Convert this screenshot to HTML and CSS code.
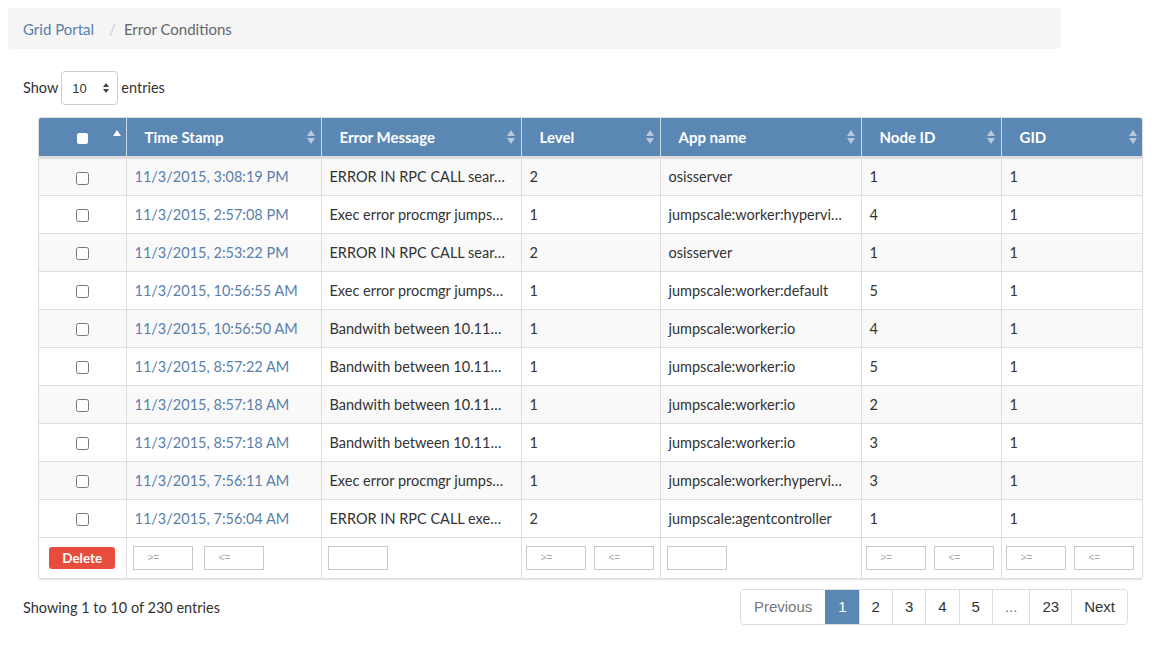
FILE: index.html
```html
<!DOCTYPE html>
<html>
<head>
<meta charset="utf-8">
<link rel="stylesheet" href="styles.css">
</head>
<body>
<div class="page">
  <ol class="breadcrumb">
    <li><a href="#">Grid Portal</a></li>
    <li class="sep">/</li>
    <li class="current">Error Conditions</li>
  </ol>

  <div class="length">
    <span>Show</span>
    <div class="select"><span>10</span><span class="spin"><i class="up"></i><i class="down"></i></span></div>
    <span>entries</span>
  </div>

  <div class="table-wrap">
    <table class="grid">
      <colgroup>
        <col style="width:87px"><col style="width:195px"><col style="width:200px"><col style="width:139px"><col style="width:201px"><col style="width:140px"><col style="width:142px">
      </colgroup>
      <thead>
        <tr>
          <th class="chk"><span class="box"></span><span class="asc"></span></th>
          <th>Time Stamp<span class="sort"></span></th>
          <th>Error Message<span class="sort"></span></th>
          <th>Level<span class="sort"></span></th>
          <th>App name<span class="sort"></span></th>
          <th>Node ID<span class="sort"></span></th>
          <th>GID<span class="sort"></span></th>
        </tr>
      </thead>
      <tbody>
        <tr><td class="chk"><input type="checkbox"></td><td><a href="#">11/3/2015, 3:08:19 PM</a></td><td>ERROR IN RPC CALL sear…</td><td>2</td><td>osisserver</td><td>1</td><td>1</td></tr>
        <tr><td class="chk"><input type="checkbox"></td><td><a href="#">11/3/2015, 2:57:08 PM</a></td><td>Exec error procmgr jumps…</td><td>1</td><td>jumpscale:worker:hypervi…</td><td>4</td><td>1</td></tr>
        <tr><td class="chk"><input type="checkbox"></td><td><a href="#">11/3/2015, 2:53:22 PM</a></td><td>ERROR IN RPC CALL sear…</td><td>2</td><td>osisserver</td><td>1</td><td>1</td></tr>
        <tr><td class="chk"><input type="checkbox"></td><td><a href="#">11/3/2015, 10:56:55 AM</a></td><td>Exec error procmgr jumps…</td><td>1</td><td>jumpscale:worker:default</td><td>5</td><td>1</td></tr>
        <tr><td class="chk"><input type="checkbox"></td><td><a href="#">11/3/2015, 10:56:50 AM</a></td><td>Bandwith between 10.11…</td><td>1</td><td>jumpscale:worker:io</td><td>4</td><td>1</td></tr>
        <tr><td class="chk"><input type="checkbox"></td><td><a href="#">11/3/2015, 8:57:22 AM</a></td><td>Bandwith between 10.11…</td><td>1</td><td>jumpscale:worker:io</td><td>5</td><td>1</td></tr>
        <tr><td class="chk"><input type="checkbox"></td><td><a href="#">11/3/2015, 8:57:18 AM</a></td><td>Bandwith between 10.11…</td><td>1</td><td>jumpscale:worker:io</td><td>2</td><td>1</td></tr>
        <tr><td class="chk"><input type="checkbox"></td><td><a href="#">11/3/2015, 8:57:18 AM</a></td><td>Bandwith between 10.11…</td><td>1</td><td>jumpscale:worker:io</td><td>3</td><td>1</td></tr>
        <tr><td class="chk"><input type="checkbox"></td><td><a href="#">11/3/2015, 7:56:11 AM</a></td><td>Exec error procmgr jumps…</td><td>1</td><td>jumpscale:worker:hypervi…</td><td>3</td><td>1</td></tr>
        <tr><td class="chk"><input type="checkbox"></td><td><a href="#">11/3/2015, 7:56:04 AM</a></td><td>ERROR IN RPC CALL exe…</td><td>2</td><td>jumpscale:agentcontroller</td><td>1</td><td>1</td></tr>
      </tbody>
      <tfoot>
        <tr>
          <td class="chk"><button class="delete">Delete</button></td>
          <td class="wide"><div class="pair"><input class="flt" placeholder="&gt;="><input class="flt" placeholder="&lt;="></div></td>
          <td class="single"><input class="flt"></td>
          <td class="narrow"><div class="pair"><input class="flt" placeholder="&gt;="><input class="flt" placeholder="&lt;="></div></td>
          <td class="single"><input class="flt"></td>
          <td class="narrow"><div class="pair"><input class="flt" placeholder="&gt;="><input class="flt" placeholder="&lt;="></div></td>
          <td class="narrow"><div class="pair"><input class="flt" placeholder="&gt;="><input class="flt" placeholder="&lt;="></div></td>
        </tr>
      </tfoot>
    </table>
  </div>

  <div class="bottom">
    <div class="info">Showing 1 to 10 of 230 entries</div>
    <ul class="pager">
      <li class="muted first">Previous</li>
      <li class="active">1</li>
      <li>2</li>
      <li>3</li>
      <li>4</li>
      <li>5</li>
      <li class="muted">...</li>
      <li>23</li>
      <li>Next</li>
    </ul>
  </div>
</div>
</body>
</html>
```

FILE: styles.css
```css
* { box-sizing: border-box; }
body {
  margin: 8px;
  font-family: Lato, "Open Sans", sans-serif;
  font-size: 14.5px;
  color: #333;
  background: #fff;
}
a { color: #5a7fab; text-decoration: none; }

.page { width: 1135px; }

.breadcrumb {
  list-style: none;
  margin: 0;
  width: 1053px;
  height: 41px;
  padding: 0 15px;
  background: #f5f5f5;
  border-radius: 4px;
  display: flex;
  align-items: center;
  font-size: 15px;
}
.breadcrumb li { line-height: 20px; }
.breadcrumb .sep { color: #ccc; padding: 0 8px 0 15px; }
.breadcrumb .current { color: #666; }

.length {
  display: flex;
  align-items: center;
  gap: 3px;
  margin: 22px 0 0 15px;
  height: 34px;
}
.length > span { position: relative; top: -1px; }
.select {
  width: 57px;
  height: 34px;
  border: 1px solid #ccc;
  border-radius: 4px;
  display: flex;
  align-items: center;
  justify-content: space-between;
  padding: 0 8px 0 10px;
  font-size: 13px;
  font-family: "Liberation Sans", sans-serif;
  color: #333;
}
.spin { display: flex; flex-direction: column; gap: 2px; }
.spin i { display: block; width: 0; height: 0; border-left: 3px solid transparent; border-right: 3px solid transparent; }
.spin .up { border-bottom: 4px solid #444; }
.spin .down { border-top: 4px solid #444; }

.table-wrap {
  margin: 12px 0 0 30px;
  width: 1105px;
  border: 1px solid #ddd;
  border-radius: 3px;
  box-shadow: 0 1px 1px rgba(0,0,0,0.12);
  overflow: hidden;
}
.grid {
  width: 1104px;
  border-collapse: collapse;
  table-layout: fixed;
}
.grid th {
  background: #5b87b4;
  color: #fff;
  font-weight: bold;
  font-size: 15px;
  text-align: left;
  height: 39px;
  padding: 0 18px 0 18px;
  border-left: 1px solid #c9d7e6;
  border-bottom: 3px solid #ddd;
  position: relative;
  white-space: nowrap;
}
.grid th:first-child { border-left: none; }
.sort {
  position: absolute;
  right: 6px;
  top: 12px;
  width: 8px;
  height: 14px;
}
.sort::before, .sort::after {
  content: "";
  position: absolute;
  left: 0;
  border-left: 4px solid transparent;
  border-right: 4px solid transparent;
}
.sort::before { top: 0; border-bottom: 6px solid #b8c9dc; }
.sort::after { bottom: 0; border-top: 6px solid #b8c9dc; }
.asc {
  position: absolute;
  right: 5px;
  top: 12px;
  border-left: 4px solid transparent;
  border-right: 4px solid transparent;
  border-bottom: 6px solid #fff;
}
.grid th.chk { text-align: center; padding: 0; }
.box {
  display: inline-block;
  width: 11px;
  height: 11px;
  background: #fff;
  border-radius: 2px;
  vertical-align: middle;
  margin-left: 0;
}

.grid td {
  height: 38px;
  padding: 0 8px;
  border-left: 1px solid #ddd;
  border-top: 1px solid #ddd;
  white-space: nowrap;
  overflow: hidden;
}
.grid td:first-child { border-left: none; }
.grid tbody tr:first-child td { border-top: none; }
.grid tbody tr:nth-child(odd) td { background: #f9f9f9; }
.grid td.chk { text-align: center; padding: 0; }
.grid td.chk input { margin: 0; width: 13px; height: 13px; vertical-align: middle; }

.grid tfoot td { height: 41px; }
.grid tfoot td.wide { padding: 0 6px; }
.grid tfoot td.single { padding: 0 6px; }
.grid tfoot td.narrow { padding: 0 4px; }
.pair { display: flex; gap: 8px; }
.wide .pair { gap: 11px; }
.flt {
  width: 60px;
  height: 24px;
  border: 1px solid #c8c8c8;
  padding: 0 14px;
  font-size: 10px;
  font-family: "Liberation Sans", sans-serif;
  color: #333;
  outline: none;
  display: block;
}
.flt::placeholder { color: #aaa; }
.delete {
  background: #e74c3c;
  color: #fff;
  border: none;
  border-radius: 3px;
  font-family: Lato, sans-serif;
  font-weight: bold;
  font-size: 13.5px;
  width: 66px;
  height: 22px;
  padding: 0;
  margin: 0 auto;
  display: block;
}

.bottom {
  display: flex;
  justify-content: space-between;
  align-items: center;
  margin: 10px 0 0 15px;
  width: 1105px;
}
.info { font-size: 14.5px; color: #333; }
.pager {
  list-style: none;
  margin: 0;
  padding: 0;
  display: flex;
  border: 1px solid #ddd;
  border-radius: 4px;
  overflow: hidden;
  height: 36px;
}
.pager li {
  padding: 0 12px;
  height: 34px;
  line-height: 34px;
  min-width: 33px;
  text-align: center;
  border-left: 1px solid #ddd;
  font-family: "Liberation Sans", sans-serif;
  font-size: 15px;
  color: #333;
}
.pager li.first { border-left: none; padding: 0 13px; }
.pager li.muted { color: #777; }
.pager li.active { background: #5b87b4; color: #fff; border-left-color: #5b87b4; }
```
